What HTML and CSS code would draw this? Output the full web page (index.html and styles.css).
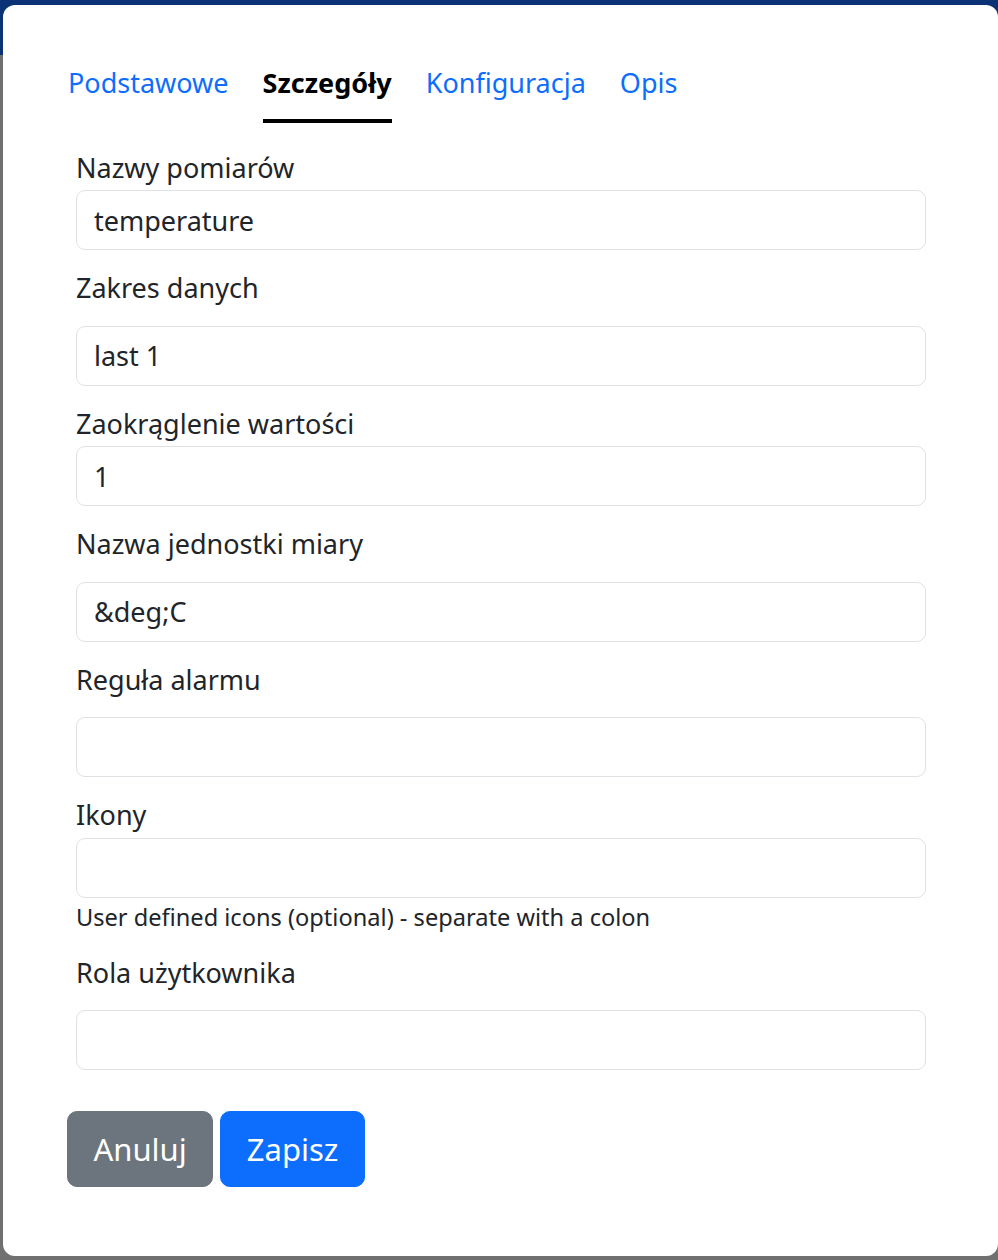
FILE: index.html
```html
<!DOCTYPE html>
<html lang="pl">
<head>
<meta charset="utf-8">
<title>Edycja</title>
<link rel="stylesheet" href="styles.css">
</head>
<body>
<div class="page">
  <div class="navbar"></div>
  <div class="page-body"></div>
</div>
<div class="modal">
  <nav class="tabs">
    <span class="tab">Podstawowe</span>
    <span class="tab active">Szczegóły</span>
    <span class="tab">Konfiguracja</span>
    <span class="tab">Opis</span>
  </nav>
  <form class="form">
    <div class="field">
      <label class="label tight">Nazwy pomiarów</label>
      <input class="input" type="text" value="temperature">
    </div>
    <div class="field">
      <label class="label loose">Zakres danych</label>
      <input class="input" type="text" value="last 1">
    </div>
    <div class="field">
      <label class="label tight">Zaokrąglenie wartości</label>
      <input class="input" type="text" value="1">
    </div>
    <div class="field">
      <label class="label loose">Nazwa jednostki miary</label>
      <input class="input" type="text" value="&amp;deg;C">
    </div>
    <div class="field">
      <label class="label loose">Reguła alarmu</label>
      <input class="input" type="text" value="">
    </div>
    <div class="field">
      <label class="label tight">Ikony</label>
      <input class="input" type="text" value="">
      <div class="help">User defined icons (optional) - separate with a colon</div>
    </div>
    <div class="field">
      <label class="label loose">Rola użytkownika</label>
      <input class="input" type="text" value="">
    </div>
    <div class="actions">
      <button type="button" class="btn btn-secondary">Anuluj</button>
      <button type="button" class="btn btn-primary">Zapisz</button>
    </div>
  </form>
</div>
</body>
</html>
```

FILE: styles.css
```css
html, body {
  margin: 0;
  padding: 0;
}
body {
  background: #707070;
  font-family: "Noto Sans", "Open Sans", sans-serif;
  color: #212529;
  width: 998px;
  height: 1260px;
  overflow: hidden;
}
.page {
  height: 1260px;
}
.navbar {
  height: 55px;
  background: #0a3274;
}
.modal {
  position: absolute;
  left: 3px;
  top: 5px;
  width: 995px;
  height: 1251px;
  box-sizing: border-box;
  background: #fff;
  border-radius: 12px;
  padding: 58px 72px 0 73px;
}
.tabs {
  display: flex;
  gap: 34px;
  margin-left: -8px;
}
.tab {
  font-size: 27px;
  line-height: 40.5px;
  color: #0d6efd;
  padding-bottom: 15px;
  border-bottom: 4px solid transparent;
}
.tab.active {
  font-weight: 700;
  color: #000;
  border-bottom-color: #000;
}
.form {
  margin-top: 25px;
}
.field {
  margin-bottom: 18px;
}
.label {
  display: block;
  font-size: 27px;
  line-height: 40.5px;
}
.label.tight {
  margin-bottom: 2px;
}
.label.loose {
  margin-bottom: 17px;
}
.input {
  display: block;
  width: 100%;
  box-sizing: border-box;
  height: 60px;
  border: 1px solid #dee2e6;
  border-radius: 9px;
  padding: 0 17px;
  font-family: inherit;
  font-size: 27px;
  color: #212529;
  background: #fff;
  outline: none;
}
.help {
  font-size: 23.6px;
  line-height: 35px;
  margin-top: 2px;
  margin-bottom: 1px;
  color: #212529;
}
.actions {
  display: flex;
  gap: 7px;
  margin-top: 41px;
  margin-left: -9px;
}
.btn {
  font-family: inherit;
  font-size: 31px;
  line-height: 46px;
  padding: 14px 25.5px;
  border: 1px solid transparent;
  border-radius: 10px;
  color: #fff;
  cursor: pointer;
}
.btn-secondary {
  background: #6c757d;
  border-color: #6c757d;
}
.btn-primary {
  background: #0d6efd;
  border-color: #0d6efd;
}
```
